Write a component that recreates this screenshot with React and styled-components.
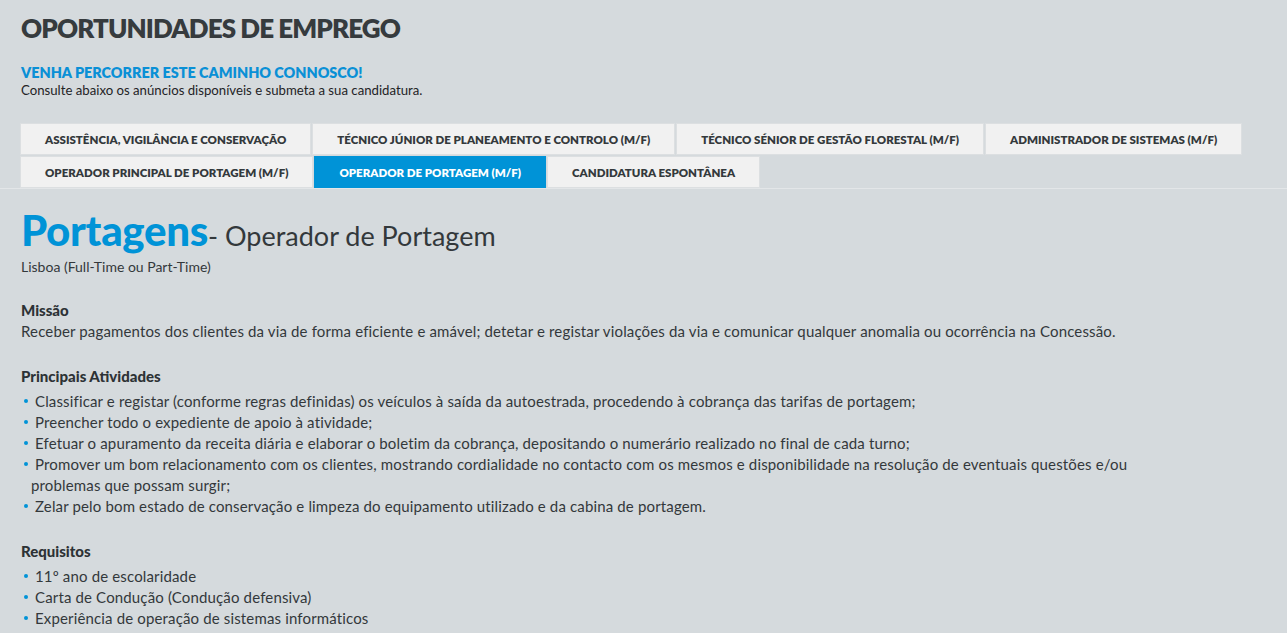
import React from 'react';
import styled, { createGlobalStyle } from 'styled-components';

const GlobalStyle = createGlobalStyle`
	html, body {
		margin: 0;
		padding: 0;
		background: #d5dadd;
	}
	body {
		font-family: Lato, "Open Sans", Arial, sans-serif;
		color: #333a3e;
	}
`;

const Page = styled.div`
	min-height: 633px;
	background: #d5dadd;
	overflow: hidden;
`;

const Header = styled.header`
	padding: 12px 21px 0;
`;

const PageTitle = styled.h1`
	margin: 0;
	font-size: 26px;
	line-height: 32px;
	font-weight: 800;
	letter-spacing: -0.9px;
	color: #363b3e;
`;

const Tagline = styled.h2`
	margin: 20px 0 0;
	font-size: 14.4px;
	line-height: 17px;
	font-weight: 800;
	color: #0a90d6;
`;

const Intro = styled.p`
	margin: 1px 0 0;
	font-size: 13.2px;
	line-height: 16px;
	color: #1f2326;
`;

const TabsBar = styled.nav`
	margin-top: 25px;
	padding: 0 20px;
	border-bottom: 1px solid #e3e6e8;
`;

const TabList = styled.ul`
	list-style: none;
	margin: 0;
	padding: 0;
	display: flex;
	flex-wrap: wrap;
	gap: 1px;
`;

const Tab = styled.li`
	height: 30px;
	padding: 0 24px;
	display: flex;
	align-items: center;
	background: ${(p) => (p.$active ? '#0093d7' : '#f1f1f1')};
	border: 1px solid ${(p) => (p.$active ? '#0093d7' : '#dcdfe1')};
	color: ${(p) => (p.$active ? '#ffffff' : '#34393c')};
	font-size: 11.5px;
	font-weight: 800;
	white-space: nowrap;
	cursor: pointer;
`;

const Content = styled.main`
	padding: 21px 21px 0;
`;

const JobTitle = styled.div`
	display: flex;
	align-items: baseline;
	line-height: 40px;
`;

const Area = styled.span`
	font-size: 42px;
	font-weight: 900;
	color: #0093d7;
	letter-spacing: -0.3px;
`;

const Role = styled.span`
	font-size: 27px;
	color: #33383b;
`;

const Location = styled.p`
	margin: 2px 0 0;
	font-size: 14px;
	line-height: 18px;
	color: #33383b;
`;

const Section = styled.section`
	margin-top: ${(p) => p.$top || 24}px;
`;

const SectionTitle = styled.h3`
	margin: 0;
	font-size: 15px;
	line-height: 21px;
	font-weight: 900;
	color: #2d3235;
`;

const Text = styled.p`
	margin: 0;
	font-size: 15px;
	line-height: 21px;
	letter-spacing: 0.15px;
	color: #33383b;
`;

const List = styled.ul`
	list-style: none;
	margin: 4px 0 0;
	padding: 0;
	max-width: ${(p) => p.$width || 1200}px;
`;

const Item = styled.li`
	padding-left: 10px;
	font-size: 15px;
	line-height: 21px;
	letter-spacing: 0.15px;
	color: #33383b;

	&::before {
		content: '';
		display: inline-block;
		width: 4px;
		height: 4px;
		margin: 0 7px 0 -7px;
		border-radius: 50%;
		background: #0093d7;
		vertical-align: 4px;
	}
`;

const TABS = [
	'ASSISTÊNCIA, VIGILÂNCIA E CONSERVAÇÃO',
	'TÉCNICO JÚNIOR DE PLANEAMENTO E CONTROLO (M/F)',
	'TÉCNICO SÉNIOR DE GESTÃO FLORESTAL (M/F)',
	'ADMINISTRADOR DE SISTEMAS (M/F)',
	'OPERADOR PRINCIPAL DE PORTAGEM (M/F)',
	'OPERADOR DE PORTAGEM (M/F)',
	'CANDIDATURA ESPONTÂNEA',
];

const ACTIVITIES = [
	'Classificar e registar (conforme regras definidas) os veículos à saída da autoestrada, procedendo à cobrança das tarifas de portagem;',
	'Preencher todo o expediente de apoio à atividade;',
	'Efetuar o apuramento da receita diária e elaborar o boletim da cobrança, depositando o numerário realizado no final de cada turno;',
	'Promover um bom relacionamento com os clientes, mostrando cordialidade no contacto com os mesmos e disponibilidade na resolução de eventuais questões e/ou problemas que possam surgir;',
	'Zelar pelo bom estado de conservação e limpeza do equipamento utilizado e da cabina de portagem.',
];

const REQUIREMENTS = [
	'11º ano de escolaridade',
	'Carta de Condução (Condução defensiva)',
	'Experiência de operação de sistemas informáticos',
];

export default function App() {
	return (
		<Page>
			<GlobalStyle />
			<Header>
				<PageTitle>OPORTUNIDADES DE EMPREGO</PageTitle>
				<Tagline>VENHA PERCORRER ESTE CAMINHO CONNOSCO!</Tagline>
				<Intro>Consulte abaixo os anúncios disponíveis e submeta a sua candidatura.</Intro>
			</Header>
			<TabsBar>
				<TabList>
					{TABS.map((label) => (
						<Tab key={label} $active={label === 'OPERADOR DE PORTAGEM (M/F)'}>
							{label}
						</Tab>
					))}
				</TabList>
			</TabsBar>
			<Content>
				<JobTitle>
					<Area>Portagens</Area>
					<Role>- Operador de Portagem</Role>
				</JobTitle>
				<Location>Lisboa (Full-Time ou Part-Time)</Location>
				<Section $top={24}>
					<SectionTitle>Missão</SectionTitle>
					<Text>
						Receber pagamentos dos clientes da via de forma eficiente e amável; detetar e registar
						violações da via e comunicar qualquer anomalia ou ocorrência na Concessão.
					</Text>
				</Section>
				<Section>
					<SectionTitle>Principais Atividades</SectionTitle>
					<List $width={1130}>
						{ACTIVITIES.map((a) => (
							<Item key={a}>{a}</Item>
						))}
					</List>
				</Section>
				<Section>
					<SectionTitle>Requisitos</SectionTitle>
					<List>
						{REQUIREMENTS.map((r) => (
							<Item key={r}>{r}</Item>
						))}
					</List>
				</Section>
			</Content>
		</Page>
	);
}
